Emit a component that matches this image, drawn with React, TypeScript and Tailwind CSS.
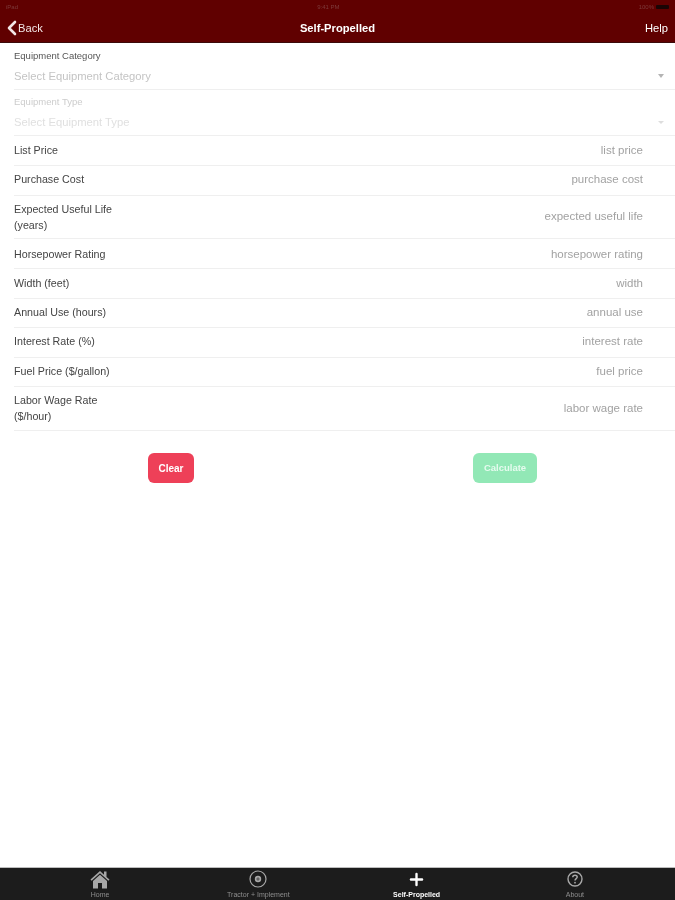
import React from 'react';
import { ChevronLeft, Plus } from 'lucide-react';

const rows = [
  { label: 'List Price', hint: 'list price', h: 'h-[30px]', ls: 'mb-[2px]', hs: '' },
  { label: 'Purchase Cost', hint: 'purchase cost', h: 'h-[30px]', ls: 'mb-[4px]', hs: 'mb-[2px]' },
  { label: 'Expected Useful Life', label2: '(years)', hint: 'expected useful life', h: 'h-[43px]', ls: '', hs: '' },
  { label: 'Horsepower Rating', hint: 'horsepower rating', h: 'h-[30px]', ls: '', hs: 'mt-[2px]' },
  { label: 'Width (feet)', hint: 'width', h: 'h-[30px]', ls: 'mb-[2px]', hs: '' },
  { label: 'Annual Use (hours)', hint: 'annual use', h: 'h-[29px]', ls: 'mb-[2px]', hs: '' },
  { label: 'Interest Rate (%)', hint: 'interest rate', h: 'h-[30px]', ls: 'mb-[4px]', hs: 'mb-[2px]' },
  { label: 'Fuel Price ($/gallon)', hint: 'fuel price', h: 'h-[29px]', ls: 'mb-[2px]', hs: '' },
  { label: 'Labor Wage Rate', label2: '($/hour)', hint: 'labor wage rate', h: 'h-[44px]', ls: 'mb-[2px]', hs: '' },
];

const HomeIcon = () => (
  <svg width="20" height="19" viewBox="0 0 20 19" fill="#a8a8a8">
    <path d="M10 1 0.5 9.6 1.6 10.8 10 3.3 18.4 10.8 19.5 9.6 16.5 6.9V1.6H14V4.7Z" />
    <path d="M10 4.8 3 11V18.5H8V13H12V18.5H17V11Z" />
  </svg>
);

const TargetIcon = () => (
  <svg width="18" height="18" viewBox="0 0 18 18" fill="none" stroke="#a8a8a8">
    <circle cx="9" cy="9" r="8" strokeWidth="1.2" />
    <circle cx="9" cy="9" r="3.2" fill="#a8a8a8" stroke="none" />
    <path d="M9 7.2V10.8M7.2 9H10.8" stroke="#3a3a3a" strokeWidth="0.8" />
  </svg>
);

const HelpIcon = () => (
  <svg width="16" height="16" viewBox="0 0 16 16" fill="none" stroke="#a8a8a8">
    <circle cx="8" cy="8" r="7" strokeWidth="1.4" />
    <path d="M5.8 6.2C5.8 4.9 6.8 4.2 8 4.2S10.2 5 10.2 6.1C10.2 7.6 8 7.7 8 9.6" strokeWidth="1.5" />
    <circle cx="8" cy="11.7" r="0.9" fill="#a8a8a8" stroke="none" />
  </svg>
);

const tabs = [
  { label: 'Home', icon: <HomeIcon /> },
  { label: 'Tractor + Implement', icon: <TargetIcon /> },
  { label: 'Self-Propelled', icon: <Plus size={19} strokeWidth={3} color="#ffffff" />, active: true },
  { label: 'About', icon: <HelpIcon /> },
];

export default function App() {
  return (
    <div className="w-[675px] h-[900px] overflow-hidden bg-white">
      <div className="w-[675px] h-[900px] flex flex-col bg-white blur-[0.45px] font-['Liberation_Sans',sans-serif]">
        {/* header */}
        <div className="h-[43px] shrink-0 bg-[#600000] border-b border-[#3c0a0a] flex flex-col">
          <div className="h-[14px] px-[6px] flex items-center justify-between text-[6px] text-[#7d3a3a]">
            <span>iPad</span>
            <span>9:41 PM</span>
            <span className="flex items-center gap-[2px]">
              100%
              <span className="w-[13px] h-[4px] rounded-[1px] bg-[#1a0505]" />
            </span>
          </div>
          <div className="flex-1 relative flex items-center justify-between pr-[7px] text-[11.2px] text-white">
            <div className="flex items-center text-[#f3e6e6]">
              <ChevronLeft size={24} strokeWidth={2.6} className="-mr-[6px]" />
              <span>Back</span>
            </div>
            <span className="absolute left-0 right-0 text-center font-bold pointer-events-none">Self-Propelled</span>
            <span>Help</span>
          </div>
        </div>

        {/* form */}
        <div className="pl-[14px]">
          <div className="h-[47px] border-b border-[#efefef] flex flex-col pr-[11px]">
            <span className="text-[9.5px] leading-[11px] mt-[7px] text-[#555555]">Equipment Category</span>
            <div className="flex items-center justify-between mt-[7px]">
              <span className="text-[11.25px] leading-[16px] text-[#c4c4c4]">Select Equipment Category</span>
              <span className="w-0 h-0 border-x-[3px] border-x-transparent border-t-[4px] border-t-[#b4b4b4]" />
            </div>
          </div>
          <div className="h-[46px] border-b border-[#efefef] flex flex-col pr-[11px]">
            <span className="text-[9.5px] leading-[11px] mt-[6px] text-[#cccccc]">Equipment Type</span>
            <div className="flex items-center justify-between mt-[7px]">
              <span className="text-[11.25px] leading-[16px] text-[#e0e0e0]">Select Equipment Type</span>
              <span className="w-0 h-0 border-x-[3px] border-x-transparent border-t-[3px] border-t-[#dddddd]" />
            </div>
          </div>
          {rows.map((r) => (
            <div key={r.label} className={`${r.h} border-b border-[#efefef] flex items-center justify-between pr-[32px]`}>
              <span className={`${r.ls} text-[10.7px] leading-[16px] text-[#444444]`}>
                {r.label}
                {r.label2 && <><br />{r.label2}</>}
              </span>
              <span className={`${r.hs} text-[11.5px] text-[#a2a2a2]`}>{r.hint}</span>
            </div>
          ))}
        </div>

        {/* buttons */}
        <div className="h-[52px] mt-[22px] shrink-0 flex">
          <div className="w-[342px] flex justify-center">
            <button className="w-[46px] h-[30px] rounded-[6px] bg-[#ee4058] text-white text-[10px] font-bold">Clear</button>
          </div>
          <div className="w-[326px] flex justify-center">
            <button className="w-[64px] h-[30px] rounded-[6px] bg-[#92e8b6] text-[#e6fbef] text-[9.5px] font-bold">Calculate</button>
          </div>
        </div>

        <div className="flex-1" />

        {/* tab bar */}
        <div className="h-[33px] shrink-0 bg-[#1c1c1c] border-t border-[#bdbdbd] px-[21px] grid grid-cols-4">
          {tabs.map((t) => (
            <div key={t.label} className="flex flex-col items-center">
              <div className="h-[22px] flex items-center justify-center">{t.icon}</div>
              <span className={`text-[7px] leading-[8px] mt-[1px] ${t.active ? 'text-white font-bold' : 'text-[#8e8e8e]'}`}>{t.label}</span>
            </div>
          ))}
        </div>
      </div>
    </div>
  );
}
